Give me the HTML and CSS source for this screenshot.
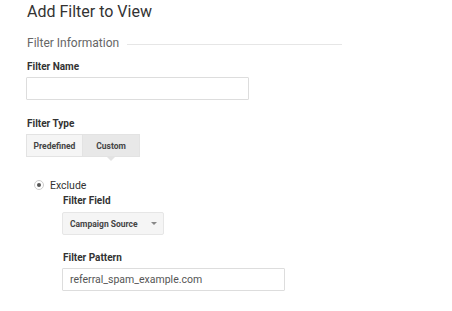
FILE: index.html
```html
<!DOCTYPE html>
<html lang="en">
<head>
  <meta charset="UTF-8" />
  <title>Add Filter to View</title>
  <link rel="stylesheet" href="styles.css">
</head>
<body>

  <div class="page">
    <h1 class="title">Add Filter to View</h1>

    <!-- Filter Information -->
    <div class="section-head">
      <span>Filter Information</span>
      <div class="rule"></div>
    </div>

    <label class="label">Filter Name</label>
    <input type="text" class="input-field wide" />

    <label class="label type-label">Filter Type</label>
    <div class="toggle">
      <button class="toggle-btn">Predefined</button>
      <button class="toggle-btn active">Custom</button>
    </div>

    <div class="custom-box">
      <div class="radio-row">
        <span class="radio"><span class="dot"></span></span>
        <span class="radio-text">Exclude</span>
      </div>

      <div class="sub">
        <label class="label">Filter Field</label>
        <div class="select">
          <span>Campaign Source</span>
          <span class="caret"></span>
        </div>

        <label class="label pattern-label">Filter Pattern</label>
        <input type="text" class="input-field" value="referral_spam_example.com" />
      </div>
    </div>
  </div>

</body>
</html>
```

FILE: styles.css
```css
body {
  margin: 0;
  background: #fff;
  font-family: Roboto, "Liberation Sans", Arial, sans-serif;
  color: #333;
}

.page {
  padding: 2px 0 0 27px;
}

.title {
  margin: 0;
  font-size: 16px;
  font-weight: 400;
  line-height: 20px;
  color: #333;
}

.section-head {
  display: flex;
  align-items: center;
  width: 315px;
  margin-top: 14px;
  font-size: 12px;
  color: #666;
  line-height: 14px;
}

.section-head .rule {
  flex: 1;
  height: 1px;
  background: #e6e6e6;
  margin-left: 8px;
  margin-top: 2px;
}

.label {
  display: block;
  font-size: 10px;
  font-weight: 700;
  color: #333;
  line-height: 12px;
  margin-top: 11px;
}

.input-field {
  display: block;
  box-sizing: border-box;
  width: 223px;
  height: 23px;
  margin: 4px 0 0 -1px;
  padding: 0 7px;
  border: 1px solid #ddd;
  border-radius: 1px;
  font-family: inherit;
  font-size: 10.5px;
  color: #555;
  outline: none;
}

.type-label {
  margin-top: 18px;
}

.toggle {
  display: flex;
  margin: 4px 0 0 -1px;
}

.toggle-btn {
  position: relative;
  width: 57px;
  height: 23px;
  padding: 0;
  border: 1px solid #e3e3e3;
  background: #f5f5f5;
  font-family: inherit;
  font-size: 8.5px;
  font-weight: 700;
  color: #444;
}

.toggle-btn + .toggle-btn {
  border-left: none;
}

.toggle-btn.active {
  background: #e8e8e8;
}

.toggle-btn.active::after {
  content: "";
  position: absolute;
  left: 50%;
  bottom: -5px;
  margin-left: -5px;
  border-left: 5px solid transparent;
  border-right: 5px solid transparent;
  border-top: 5px solid #e3e3e3;
}

.custom-box {
  padding: 22px 0 0 7px;
}

.radio-row {
  display: flex;
  align-items: center;
  height: 12px;
}

.radio {
  display: flex;
  align-items: center;
  justify-content: center;
  box-sizing: border-box;
  width: 10px;
  height: 10px;
  border: 1px solid #ccc;
  border-radius: 50%;
  background: #fff;
}

.radio .dot {
  width: 4px;
  height: 4px;
  border-radius: 50%;
  background: #555;
}

.radio-text {
  margin-left: 6px;
  font-size: 10.5px;
  color: #333;
}

.sub {
  padding-left: 29px;
}

.sub .label {
  margin-top: 4px;
}

.select {
  display: inline-flex;
  align-items: center;
  box-sizing: border-box;
  width: 102px;
  height: 23px;
  margin: 5px 0 0 -1px;
  padding: 0 6px 0 7px;
  border: 1px solid #e6e6e6;
  border-radius: 2px;
  background: #f5f5f5;
  font-size: 8.5px;
  font-weight: 700;
  color: #444;
}

.caret {
  margin-left: auto;
  border-left: 3px solid transparent;
  border-right: 3px solid transparent;
  border-top: 3px solid #888;
}

.sub .pattern-label {
  margin-top: 17px;
}

.sub .input-field {
  margin-top: 4px;
}
```
